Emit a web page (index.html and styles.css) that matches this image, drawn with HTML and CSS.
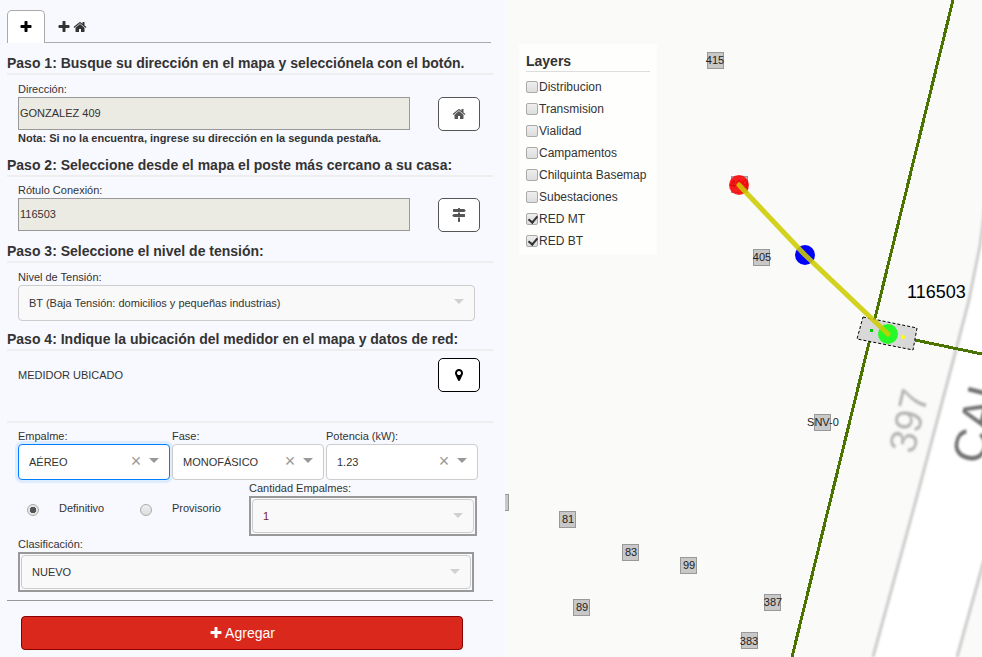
FILE: index.html
```html
<!DOCTYPE html>
<html lang="es">
<head>
<meta charset="utf-8">
<title>Factibilidad</title>
<link rel="stylesheet" href="styles.css">
</head>
<body>
<svg class="symbols" aria-hidden="true">
  <symbol id="plus" viewBox="0 0 1792 1792"><path d="M1600 736v192q0 40-28 68t-68 28h-416v416q0 40-28 68t-68 28h-192q-40 0-68-28t-28-68v-416h-416q-40 0-68-28t-28-68v-192q0-40 28-68t68-28h416v-416q0-40 28-68t68-28h192q40 0 68 28t28 68v416h416q40 0 68 28t28 68z"/></symbol>
  <symbol id="home" viewBox="0 0 1792 1792"><path d="M1472 992v480q0 26-19 45t-45 19h-384v-384h-256v384h-384q-26 0-45-19t-19-45v-480q0-1 .5-3t.5-3l575-474 575 474q1 2 1 6zm223-69l-62 74q-8 9-21 11h-3q-13 0-21-7l-692-577-692 577q-12 8-24 7-13-2-21-11l-62-74q-8-10-7-23.500t11-21.500l719-599q32-26 76-26t76 26l244 204v-195q0-14 9-23t23-9h192q14 0 23 9t9 23v408l219 182q10 8 11 21.500t-7 23.500z"/></symbol>
  <symbol id="signs" viewBox="0 0 1792 1792"><path d="M1745 297q10 10 10 23t-10 23l-141 141q-28 28-68 28h-1344q-26 0-45-19t-19-45v-256q0-26 19-45t45-19h576v-64q0-26 19-45t45-19h128q26 0 45 19t19 45v64h512q40 0 68 28zm-977 919h256v512q0 26-19 45t-45 19h-128q-26 0-45-19t-19-45v-512zm832-448q26 0 45 19t19 45v256q0 26-19 45t-45 19h-1344q-40 0-68-28l-141-141q-10-10-10-23t10-23l141-141q28-28 68-28h512v-192h256v192h576z"/></symbol>
  <symbol id="marker" viewBox="0 0 1792 1792"><path d="M1152 640q0-106-75-181t-181-75-181 75-75 181 75 181 181 75 181-75 75-181zm256 0q0 109-33 179l-364 774q-16 33-47.500 52t-67.500 19-67.500-19-46.500-52l-365-774q-33-70-33-179 0-212 150-362t362-150 362 150 150 362z"/></symbol>
</svg>
<div class="app">
  <main class="panel">
    <nav class="tabs">
      <button type="button" class="tab tab-active" aria-label="Con dirección"><svg class="icon"><use href="#plus"/></svg></button>
      <button type="button" class="tab" aria-label="Nueva dirección"><svg class="icon"><use href="#plus"/></svg><svg class="icon"><use href="#home"/></svg></button>
    </nav>
    <form>
      <h2 class="step">Paso 1: Busque su dirección en el mapa y selecciónela con el botón.</h2>
      <div class="step-body with-button">
        <div class="field">
          <label for="direccion">Dirección:</label>
          <input class="text" id="direccion" type="text" value="GONZALEZ 409" readonly>
          <strong class="note">Nota: Si no la encuentra, ingrese su dirección en la segunda pestaña.</strong>
        </div>
        <button type="button" class="pick" aria-label="Buscar casa"><svg class="icon"><use href="#home"/></svg></button>
      </div>
      <h2 class="step">Paso 2: Seleccione desde el mapa el poste más cercano a su casa:</h2>
      <div class="step-body with-button post">
        <div class="field">
          <label for="rotulo">Rótulo Conexión:</label>
          <input class="text" id="rotulo" type="text" value="116503" readonly>
        </div>
        <button type="button" class="pick" aria-label="Seleccionar poste"><svg class="icon"><use href="#signs"/></svg></button>
      </div>
      <h2 class="step">Paso 3: Seleccione el nivel de tensión:</h2>
      <div class="step-body level">
        <label for="nivel">Nivel de Tensión:</label>
        <div class="select muted"><select id="nivel" disabled><option>BT (Baja Tensión: domicilios y pequeñas industrias)</option></select></div>
      </div>
      <h2 class="step">Paso 4: Indique la ubicación del medidor en el mapa y datos de red:</h2>
      <div class="step-body meter">
        <span>MEDIDOR UBICADO</span>
        <button type="button" class="pick pick-on" aria-label="Ubicar medidor"><svg class="icon"><use href="#marker"/></svg></button>
      </div>
      <hr class="rule">
      <div class="step-body network">
        <div class="trio">
          <div class="field">
            <label for="empalme">Empalme:</label>
            <div class="select focused"><select id="empalme"><option>AÉREO</option></select><button type="button" class="clear" aria-label="Limpiar">×</button></div>
          </div>
          <div class="field">
            <label for="fase">Fase:</label>
            <div class="select"><select id="fase"><option>MONOFÁSICO</option></select><button type="button" class="clear" aria-label="Limpiar">×</button></div>
          </div>
          <div class="field">
            <label for="potencia">Potencia (kW):</label>
            <div class="select"><select id="potencia"><option>1.23</option></select><button type="button" class="clear" aria-label="Limpiar">×</button></div>
          </div>
        </div>
        <div class="options">
          <div class="radios">
            <input type="radio" name="tipo" id="definitivo" checked><label for="definitivo">Definitivo</label>
            <input type="radio" name="tipo" id="provisorio"><label for="provisorio">Provisorio</label>
          </div>
          <div class="field">
            <label for="cantidad">Cantidad Empalmes:</label>
            <div class="frame"><div class="select muted quantity"><select id="cantidad" disabled><option>1</option></select></div></div>
          </div>
        </div>
        <div class="field class-field">
          <label for="clasificacion">Clasificación:</label>
          <div class="frame"><div class="select muted"><select id="clasificacion" disabled><option>NUEVO</option></select></div></div>
        </div>
      </div>
      <hr class="rule rule-dark">
      <button type="submit" class="submit"><svg class="icon"><use href="#plus"/></svg>Agregar</button>
    </form>
  </main>
  <section class="map" aria-label="Mapa">
    <svg class="canvas" viewBox="505 0 477 657" preserveAspectRatio="xMinYMin slice">
      <path class="road" d="M984 200L969 300L956 350L916 500L873 657H957L982 568V200z"/>
      <g class="curb">
        <path d="M986 200L980 245L969 300L956 350L916 500L873 657"/>
        <path d="M984 560L957 657"/>
      </g>
      <text class="street lot" transform="translate(909 421) rotate(-77)" x="0" y="13">397</text>
      <text class="street name" transform="translate(982 466) rotate(-76)" x="0" y="0">CAL</text>
      <g class="cable">
        <path d="M953 0L792 657"/>
        <path d="M915 340L982 354"/>
      </g>
      <g class="lots">
        <rect x="492" y="494" width="16" height="16"/>
        <rect x="707" y="52" width="16" height="16"/><text x="715" y="64">415</text>
        <rect x="731" y="176" width="16" height="16"/><text x="739" y="188">409</text>
        <rect x="753" y="249" width="16" height="16"/><text x="762" y="261">405</text>
        <rect x="814" y="414" width="16" height="16"/><text x="823" y="426">SNV-0</text>
        <rect x="559" y="511" width="16" height="16"/><text x="568" y="523">81</text>
        <rect x="622" y="544" width="16" height="16"/><text x="631" y="556">83</text>
        <rect x="680" y="557" width="16" height="16"/><text x="689" y="569">99</text>
        <rect x="573" y="599" width="16" height="16"/><text x="582" y="611">89</text>
        <rect x="764" y="594" width="16" height="16"/><text x="773" y="606">387</text>
        <rect x="741" y="632" width="16" height="16"/><text x="749" y="645">383</text>
      </g>
      <path class="pole" d="M863 317L917 328L913 350L857 339z"/>
      <rect x="870" y="329" width="3" height="3" fill="#00c800"/>
      <circle cx="903" cy="337" r="2" fill="#ff0"/>
      <text class="pole-id" x="907" y="298">116503</text>
      <circle cx="739" cy="185" r="10" fill="#f00" fill-opacity=".85"/>
      <circle cx="805" cy="255" r="10" fill="#00f"/>
      <circle cx="888" cy="334" r="10" fill="#0f0" fill-opacity=".82"/>
      <path class="link" d="M739 185L805 255L888 334"/>
    </svg>
    <fieldset class="layers">
      <legend>Layers</legend>
      <label><input type="checkbox">Distribucion</label>
      <label><input type="checkbox">Transmision</label>
      <label><input type="checkbox">Vialidad</label>
      <label><input type="checkbox">Campamentos</label>
      <label><input type="checkbox">Chilquinta Basemap</label>
      <label><input type="checkbox">Subestaciones</label>
      <label><input type="checkbox" checked>RED MT</label>
      <label><input type="checkbox" checked>RED BT</label>
    </fieldset>
  </section>
</div>
</body>
</html>
```
FILE: styles.css
```css
* { box-sizing: border-box; }

body {
  margin: 0;
  font: 11px/16px "Liberation Sans", Arial, sans-serif;
  color: #333;
  background: #f8f9ff;
}

button, input, select { font: inherit; color: inherit; margin: 0; }
.symbols { display: none; }
.icon { width: 14px; height: 14px; fill: currentColor; }

.app { display: flex; min-height: 100vh; }
.panel { flex: 0 0 505px; min-width: 0; padding: 10px 12px 7px 7px; }

.tabs {
  display: flex;
  margin: 0 2px 10px 0;
  height: 33px;
  border-bottom: 1px solid #aaa;
}
.tab {
  display: flex;
  align-items: center;
  gap: 2px;
  height: 33px;
  padding: 0 12px;
  border: 0;
  background: none;
}
.tab-active {
  padding: 0 11px;
  border: 1px solid #aaa;
  border-bottom: 0;
  border-radius: 5px 5px 0 0;
  background: #fff;
  color: #000;
}

.step {
  margin: 0;
  font-size: 14px;
  line-height: 20px;
  white-space: nowrap;
  border-bottom: 2px solid #eee;
}
.step-body { padding: 6px 13px 8px 11px; }
.with-button {
  display: grid;
  grid-template-columns: 1fr 42px;
  gap: 28px;
  padding-bottom: 9px;
}
.post { padding-top: 5px; }
.field { display: flex; flex-direction: column; min-width: 0; }
.with-button .pick { margin-top: 16px; }
.level { display: flex; flex-direction: column; padding-right: 18px; }

.text {
  width: 100%;
  height: 33px;
  padding: 0 1px 1px;
  border: 1px solid #999;
  border-radius: 0;
  background: #ebebe4;
}
.pick {
  width: 42px;
  height: 34px;
  display: flex;
  align-items: center;
  justify-content: center;
  border: 1px solid #555;
  border-radius: 5px;
  background: #fff;
  color: #555;
}
.pick-on { border-color: #000; color: #000; }
.meter {
  display: flex;
  align-items: center;
  justify-content: space-between;
  padding: 7px 13px 29px 11px;
}

.rule { margin: 0; border: 0; border-top: 2px solid #eee; }
.rule-dark { border-top: 1px solid #999; }
.network { padding: 5px 15px 8px 11px; }

.trio { display: grid; grid-template-columns: repeat(3, 1fr); gap: 2px; }
.select { position: relative; height: 36px; }
.select select {
  appearance: none;
  width: 100%;
  height: 100%;
  padding: 0 10px;
  border: 1px solid #ccc;
  border-radius: 4px;
  background: #fff;
  opacity: 1;
}
.select::after {
  content: "";
  position: absolute;
  right: 11px;
  top: 14px;
  border: 5px solid transparent;
  border-top-color: #999;
  border-bottom: 0;
  pointer-events: none;
}
.muted select { background: #f9f9f9; color: #333; }
.muted::after { border-top-color: #d0d0d0; }
.focused select {
  border-color: #007eff;
  box-shadow: 0 0 0 3px rgba(0, 126, 255, .1);
}
.clear {
  position: absolute;
  top: 8px;
  right: 28px;
  width: 12px;
  padding: 0;
  border: 0;
  background: none;
  color: #999;
  font-size: 18px;
  line-height: 18px;
}
.frame { padding: 1px; border: 2px solid #999; background: #f8f9ff; }
.frame .select { height: 34px; }
.quantity select { color: #722; }

.options { display: grid; grid-template-columns: 231px 1fr; padding-right: 1px; }
.radios {
  display: grid;
  grid-template-columns: 30px 83px 30px 1fr;
  align-items: center;
  padding: 0 0 0 9px;
}
.radios label { padding-left: 2px; }
.radios input {
  appearance: none;
  width: 12px;
  height: 12px;
  margin-top: 4px;
  border: 1px solid #aaa;
  border-radius: 50%;
  background: linear-gradient(#eee, #ddd);
}
.radios input:checked {
  background: radial-gradient(circle, #555 0 3px, #e6e6e6 3px);
}
.class-field { padding-right: 4px; }

.submit {
  display: flex;
  align-items: center;
  justify-content: center;
  gap: 2px;
  width: calc(100% - 44px);
  height: 34px;
  margin: 15px 30px 0 14px;
  border: 1px solid #800;
  border-radius: 4px;
  background: #da291c;
  color: #fff;
  font-size: 14px;
}

.map { position: relative; flex: 1; min-width: 0; overflow: hidden; background: #fafaf9; }
.canvas { position: absolute; inset: 0; width: 100%; height: 100%; }
.road { fill: #fff; }
.curb { fill: none; stroke: #ccc; stroke-width: 3; filter: blur(1px); }
.street { filter: blur(1px); }
.lot { font-size: 38px; fill: #b4b4b4; text-anchor: middle; }
.name { font-size: 47px; fill: #707070; }
.cable { fill: none; stroke: #4b7300; stroke-width: 3; shape-rendering: crispEdges; }
.lots rect { fill: #c8c8c8; stroke: #999; shape-rendering: crispEdges; }
.lots text { font-size: 11px; fill: #222; text-anchor: middle; }
.pole { fill: #d8d8d8; stroke: #000; stroke-dasharray: 3 2; }
.pole-id { font-size: 18px; fill: #000; }
.link { fill: none; stroke: #cc0; stroke-opacity: .88; stroke-width: 5; stroke-linecap: round; stroke-linejoin: round; }

.layers {
  position: absolute;
  left: 14px;
  top: 44px;
  min-width: 138px;
  margin: 0;
  padding: 7px 7px 2px 7px;
  border: 0;
  background: rgba(255, 255, 255, .7);
  font-size: 12px;
}
.layers legend {
  float: left;
  width: 100%;
  margin-bottom: 4px;
  padding: 0;
  font-size: 14px;
  line-height: 20px;
  font-weight: bold;
  border-bottom: 1px solid #ddd;
}
.layers label { clear: both; display: flex; align-items: center; gap: 1px; height: 22px; }
.layers input {
  appearance: none;
  width: 12px;
  height: 12px;
  border: 1px solid #aaa;
  border-radius: 2px;
  background: linear-gradient(#eee, #ddd);
}
.layers input:checked::after {
  content: "";
  display: block;
  width: 4px;
  height: 7px;
  margin: 0 0 0 3px;
  border: solid #333;
  border-width: 0 2px 2px 0;
  transform: rotate(40deg);
}
```
